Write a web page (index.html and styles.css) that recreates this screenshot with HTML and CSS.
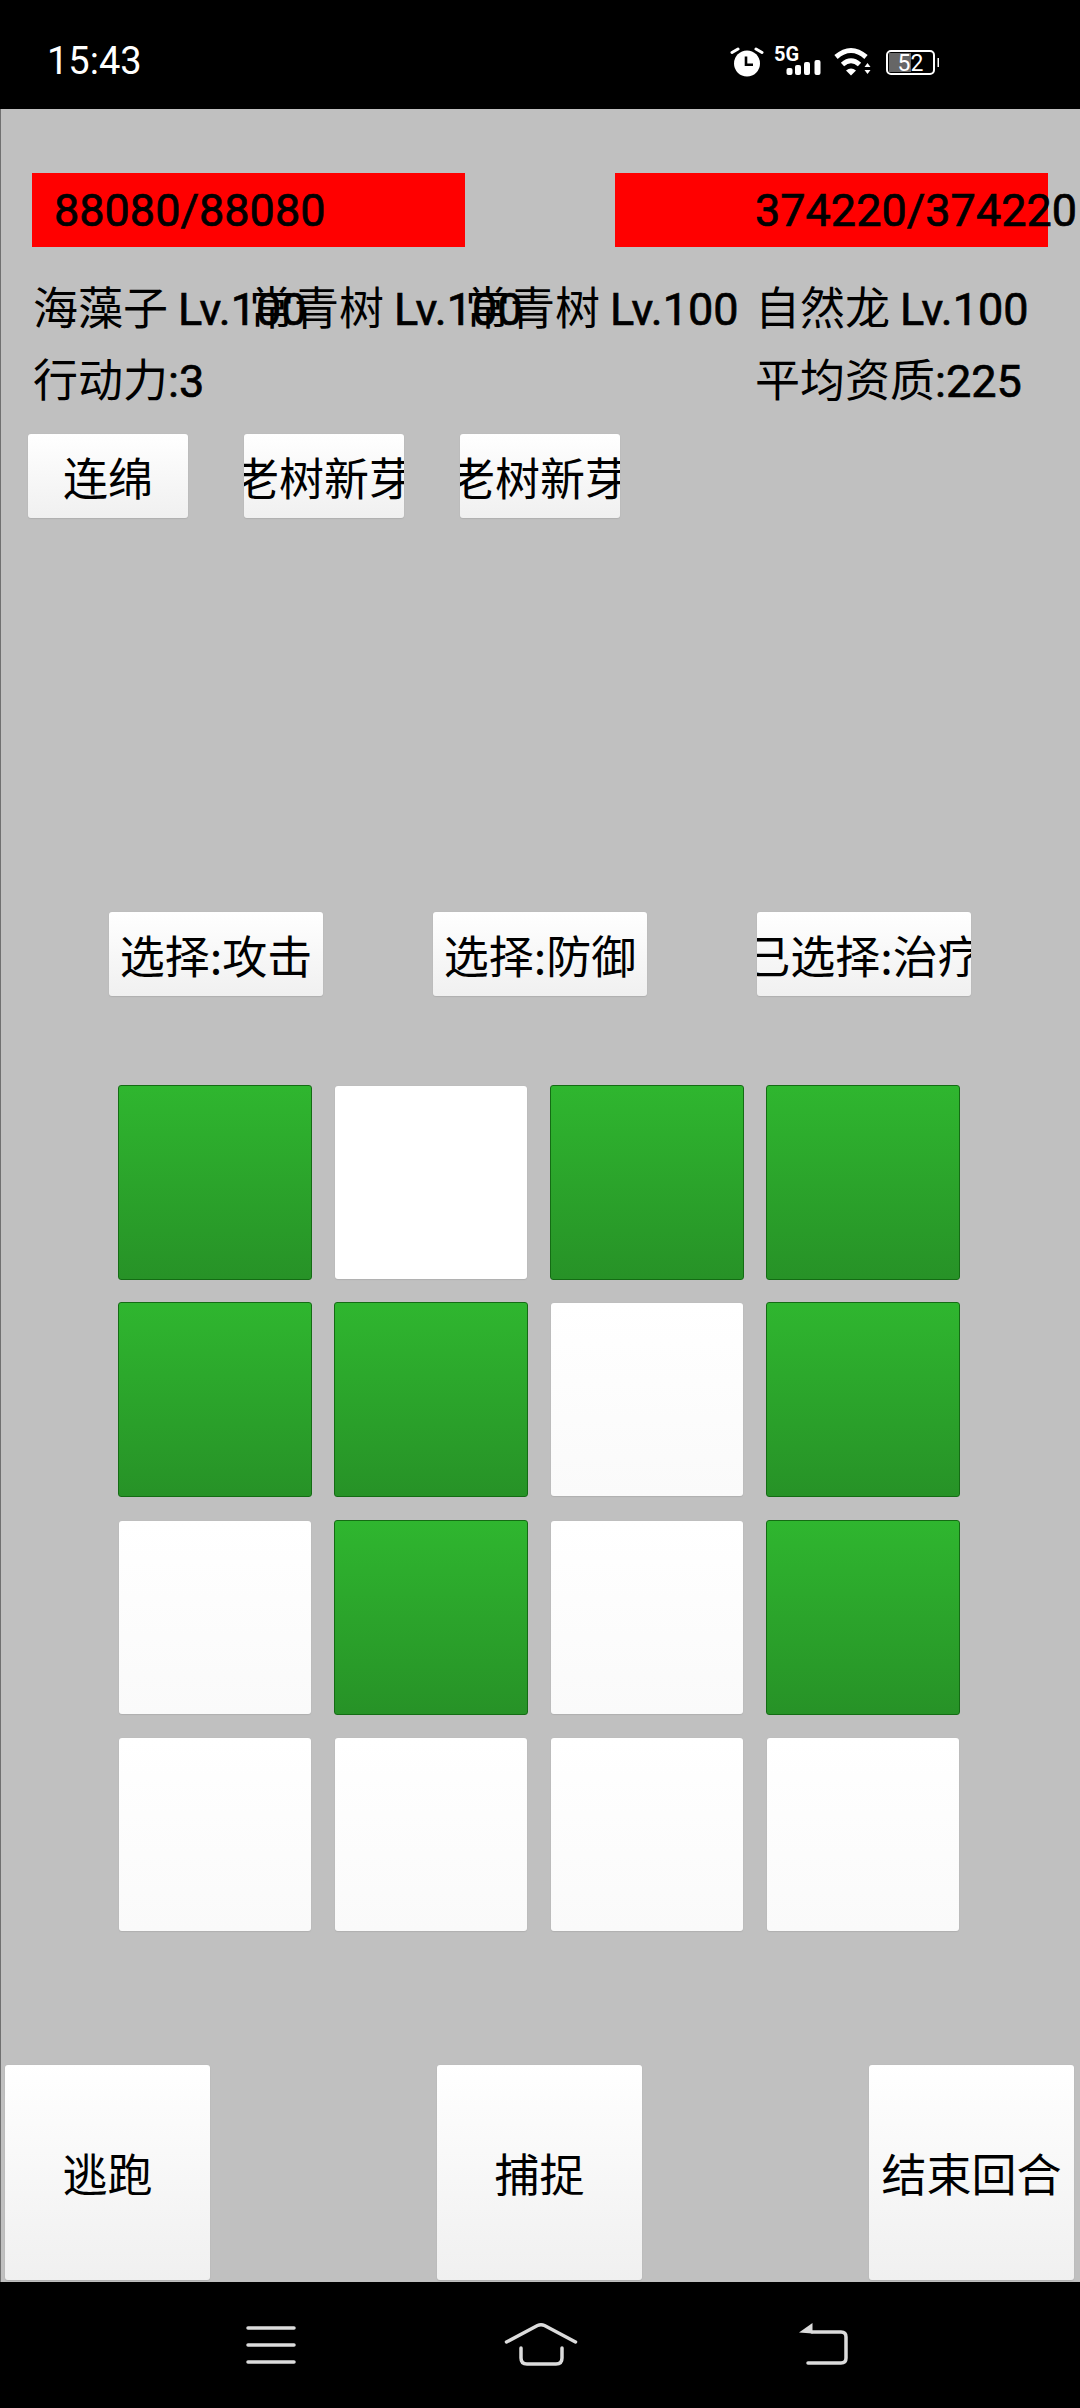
FILE: index.html
```html
<!DOCTYPE html>
<html lang="zh-CN">
<head>
<meta charset="utf-8">
<title>Battle</title>
<link rel="stylesheet" href="styles.css">
</head>
<body>
<header class="status">
  <span class="time">15:43</span>
  <div class="status-icons">
    <svg class="ic-alarm" viewBox="0 0 32 30"><path class="ear" d="M2 5.500 8 2M26 2l6 3.500"/><circle cx="17" cy="16.500" r="13" fill="#fff"/><path class="hand" d="M16 9.500v8.200h7"/></svg>
    <svg class="ic-signal" viewBox="0 0 48 30"><text class="net" x="0" y="14">5G</text><rect x="12.500" y="21" width="6" height="7" rx="2"/><rect x="21" y="18" width="6" height="10" rx="2"/><rect x="30" y="15" width="6" height="13" rx="2"/><rect x="40.500" y="13" width="6" height="15" rx="2"/></svg>
    <svg class="ic-wifi" viewBox="0 0 38 30"><path class="arc" d="M2 10Q17-3 32 10M8.500 17.500Q17 10 25.500 17.500"/><path class="fill" d="M12 23.500Q17 19.500 22 23.500L17 28.500Z"/><path class="fill" d="M33.500 16l3 4h-6zM33.500 27l3-4h-6z"/></svg>
    <svg class="ic-batt" viewBox="0 0 56 30"><rect class="shell" x="3" y="4" width="47" height="23" rx="4"/><rect x="5" y="6" width="22" height="19" fill="#666"/><text class="level" x="26.500" y="23.500">52</text><rect x="53.500" y="11" width="1.500" height="9" fill="#fff"/></svg>
  </div>
</header>

<main class="battle">
  <section class="hp-row">
    <div class="hp hp-own"><span class="num">88080/88080</span></div>
    <div class="hp hp-foe"><span class="num">374220/374220</span></div>
  </section>

  <section class="info">
    <div class="info-line">
      <div class="col col-a">海藻子 <span class="num">Lv.100</span></div>
      <div class="col col-a">常青树 <span class="num">Lv.100</span></div>
      <div class="col col-b">常青树 <span class="num">Lv.100</span></div>
      <div class="col">自然龙 <span class="num">Lv.100</span></div>
    </div>
    <div class="info-line">
      <div class="col col-wide">行动力<span class="num">:3</span></div>
      <div class="col">平均资质<span class="num">:225</span></div>
    </div>
  </section>

  <section class="skills">
    <button class="btn skill"><span>连绵</span></button>
    <button class="btn skill"><span>老树新芽</span></button>
    <button class="btn skill"><span>老树新芽</span></button>
  </section>

  <section class="choices">
    <button class="btn choice"><span>选择:攻击</span></button>
    <button class="btn choice"><span>选择:防御</span></button>
    <button class="btn choice"><span>已选择:治疗</span></button>
  </section>

  <section class="grid">
    <div class="cell on"></div><div class="cell pure"></div><div class="cell on"></div><div class="cell on"></div>
    <div class="cell on"></div><div class="cell on"></div><div class="cell"></div><div class="cell on"></div>
    <div class="cell"></div><div class="cell on"></div><div class="cell"></div><div class="cell on"></div>
    <div class="cell"></div><div class="cell"></div><div class="cell"></div><div class="cell"></div>
  </section>

  <section class="actions">
    <button class="btn action"><span>逃跑</span></button>
    <button class="btn action"><span>捕捉</span></button>
    <button class="btn action"><span>结束回合</span></button>
  </section>
</main>

<nav class="navbar">
  <svg class="nav-menu" viewBox="0 0 50 46"><path class="nav-line" d="M2 6h46M2 23h46M2 40h46"/></svg>
  <svg class="nav-home" viewBox="0 0 74 46"><path class="nav-line" d="M2.500 20 33.500 3.500Q37 1.800 40.500 3.500L71.500 20M17 26v10q0 6 6 6h29q6 0 6-6V26"/></svg>
  <svg class="nav-back" viewBox="0 0 52 46"><path class="nav-line" d="M15 10h29q5 0 5 5v21q0 5-5 5H11"/><path class="nav-fill" d="M2 10.500 15.500 1v10.500z"/></svg>
</nav>
</body>
</html>
```

FILE: styles.css
```css
* { box-sizing: border-box; }
html, body { margin: 0; padding: 0; }
body {
  width: 1080px;
  height: 2408px;
  overflow: hidden;
  display: flex;
  flex-direction: column;
  background: #000;
  color: #000;
  font-family: "Noto Sans CJK SC", "Noto Sans CJK JP", Roboto, sans-serif;
  font-size: 45px;
}

/* status bar */
.status {
  height: 109px;
  flex: none;
  display: flex;
  align-items: flex-start;
  padding: 47px 0 0 47px;
  color: #fff;
}
.time {
  font-family: Roboto, sans-serif;
  font-size: 38px;
  line-height: 28px;
}
.status-icons {
  margin-left: auto;
  margin-right: 140px;
  display: flex;
  gap: 12px;
}
.status-icons svg { height: 30px; display: block; overflow: visible; }
.ic-alarm { width: 32px; }
.ic-signal { width: 48px; }
.ic-wifi { width: 38px; }
.ic-batt { width: 56px; }
.ear { stroke: #fff; stroke-width: 3; fill: none; stroke-linecap: round; }
.hand { stroke: #000; stroke-width: 2.600; fill: none; }
.ic-signal rect { fill: #fff; }
.net { font: 700 20px Roboto, sans-serif; fill: #fff; }
.arc { stroke: #fff; stroke-width: 5; fill: none; }
.fill { fill: #fff; }
.shell { fill: none; stroke: #fff; stroke-width: 2; }
.level { font: 400 23px Roboto, sans-serif; fill: #fff; text-anchor: middle; }

/* battle area */
.battle {
  flex: 1;
  display: flex;
  flex-direction: column;
  background: #c0c0c0;
  border-left: 1px solid #707070;
  padding-top: 64px;
}
.num {
  font-family: Roboto, sans-serif;
  font-weight: 400;
  -webkit-text-stroke: 0.7px #000;
}
.hp-row {
  display: flex;
  gap: 150px;
  padding-left: 31px;
}
.hp {
  width: 433px;
  height: 74px;
  background: #f00;
  display: flex;
  align-items: center;
  white-space: nowrap;
  font-size: 45px;
}
.hp-own { padding-left: 22px; }
.hp-foe { padding-left: 140px; }

.info {
  margin-top: 22px;
  padding-left: 32px;
}
.info-line {
  display: flex;
  height: 72px;
  align-items: center;
  white-space: nowrap;
}
.col-a { width: 216px; }
.col-b { width: 290px; }
.col-wide { width: 722px; }

.btn {
  appearance: none;
  border: 0;
  padding: 0;
  margin: 0;
  display: flex;
  align-items: center;
  justify-content: center;
  overflow: hidden;
  white-space: nowrap;
  color: #000;
  font: inherit;
  border-radius: 3px;
  background: linear-gradient(#fff, #f0f0f0);
  box-shadow: 0 1px 1px #b0b0b0, 0 0 1px #b0b0b0;
}
.btn span { flex: none; }

.skills {
  display: flex;
  gap: 56px;
  margin-top: 21px;
  padding-left: 27px;
}
.skill { width: 160px; height: 84px; }

.choices {
  display: flex;
  gap: 110px;
  margin-top: 394px;
  padding-left: 108px;
}
.choice { width: 214px; height: 84px; }

.grid {
  display: grid;
  grid-template-columns: repeat(4, 194px);
  grid-auto-rows: 195px;
  column-gap: 22px;
  row-gap: 22.330px;
  margin-top: 89px;
  padding-left: 117px;
}
.cell {
  margin: 1px;
  border-radius: 3px;
  background: linear-gradient(#fff, #fafafa);
  box-shadow: 0 1px 1px #b0b0b0, 0 0 1px #b0b0b0;
}
.cell.pure { background: #fff; }
.cell.on {
  margin: 0;
  background: linear-gradient(#2fb62f, #279227);
  border: 1px solid #146c14;
  box-shadow: none;
}

.actions {
  margin-top: auto;
  display: flex;
  justify-content: space-between;
  padding: 0 6px 2px 4px;
}
.action { width: 205px; height: 215px; }

/* navigation bar */
.navbar {
  height: 126px;
  flex: none;
  display: flex;
  align-items: flex-start;
  padding: 40px 0 0 246px;
}
.navbar svg { height: 46px; display: block; }
.nav-menu { width: 50px; }
.nav-home { width: 74px; margin-left: 208px; }
.nav-back { width: 52px; margin-left: 219px; }
.nav-line { fill: none; stroke: #dcdcdc; stroke-width: 3.500; stroke-linecap: round; }
.nav-fill { fill: #dcdcdc; }
```
